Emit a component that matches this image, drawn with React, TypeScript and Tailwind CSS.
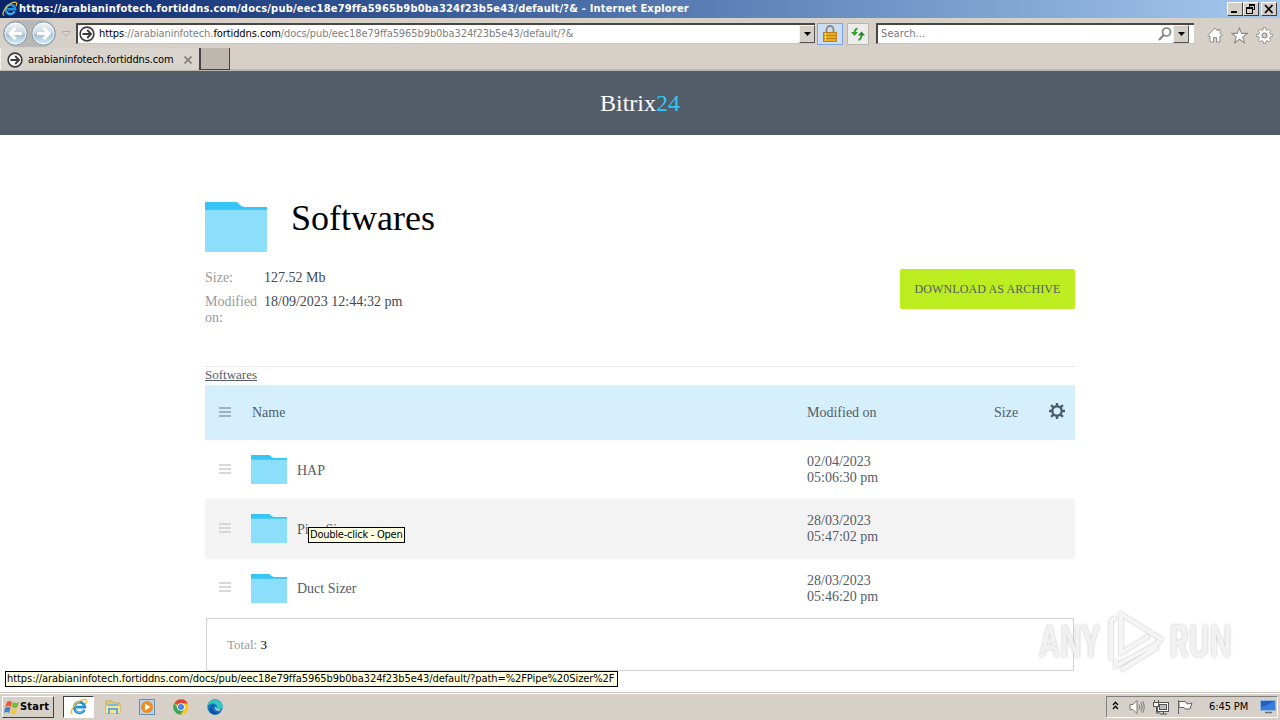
import type { ReactNode } from "react"

type Row = {
  name: string
  date: string
  time: string
  hovered?: boolean
  last?: boolean
}

const rows: Row[] = [
  { name: "HAP", date: "02/04/2023", time: "05:06:30 pm" },
  { name: "Pipe Sizer", date: "28/03/2023", time: "05:47:02 pm", hovered: true },
  { name: "Duct Sizer", date: "28/03/2023", time: "05:46:20 pm", last: true }
]

const FolderIcon = ({ className }: { className: string }) => (
  <svg className={className} viewBox="0 0 62 50" preserveAspectRatio="none">
    <path d="M0 0H31Q33 0 35 3Q37 5 40 5H62V12H0Z" fill="#36c5f4" />
    <path d="M0 8H62V48.500Q62 50 60.500 50H1.500Q0 50 0 48.500Z" fill="#8bdffa" />
  </svg>
)

const Burger = ({ dark }: { dark?: boolean }) => (
  <div className={dark ? "space-y-[2px] text-[#9fb3bf]" : "space-y-[2px] text-[#d5d7d9]"}>
    <div className="h-[2px] w-3 bg-current" />
    <div className="h-[2px] w-3 bg-current" />
    <div className="h-[2px] w-3 bg-current" />
  </div>
)

const IeIcon = ({ className }: { className: string }) => (
  <svg className={className} viewBox="0 0 18 18" fill="none">
    <path d="M14.300 11.800A5.300 5.300 0 1 1 14.800 9.200H6" stroke="#238fd5" strokeWidth="2.800" />
    <path d="M14 11.300A5 5 0 0 1 5 12" stroke="#72c8f2" strokeWidth="1" />
    <path d="M2.500 16C-1 16 3 7 9 3.300C13 .7 17 .6 16.500 3.500C16.300 4.500 16 5 15.500 6" stroke="#efbd32" strokeWidth="1.400" />
  </svg>
)

const ArrowCircle = () => (
  <svg className="size-4 shrink-0" viewBox="0 0 16 16" fill="none" stroke="#3c3c3c">
    <circle cx="8" cy="8" r="6.900" fill="#fff" strokeWidth="1.600" />
    <path d="M3.500 8H12M8.200 4L12.100 8L8.200 12" strokeWidth="1.900" />
  </svg>
)

const NavButton = ({ back }: { back?: boolean }) => (
  <svg className="size-[25px]" viewBox="0 0 25 25">
    <defs>
      <linearGradient id="nav" x1="0" y1="0" x2="0" y2="1">
        <stop offset="0" stopColor="#f4f7f9" />
        <stop offset=".48" stopColor="#c9d7e2" />
        <stop offset=".55" stopColor="#a9c1d3" />
        <stop offset="1" stopColor="#d9f2fa" />
      </linearGradient>
    </defs>
    <circle cx="12.500" cy="12.500" r="11.600" fill="url(#nav)" stroke="#8999a6" />
    <circle cx="12.500" cy="12.500" r="10.400" fill="none" stroke="#fff" strokeOpacity=".7" />
    <path
      d={back ? "M19 12.500H7.500M12.500 7L7 12.500L12.500 18" : "M6 12.500H17.500M12.500 7L18 12.500L12.500 18"}
      fill="none"
      stroke="#fff"
      strokeWidth="3"
    />
  </svg>
)

const DropButton = () => (
  <div className="flex h-[18px] w-4 items-center justify-center border border-t-[#f6f4f1] border-l-[#f6f4f1] border-r-[#555] border-b-[#555] bg-[#d4d0c8]">
    <svg className="h-1 w-[7px]" viewBox="0 0 7 4">
      <path d="M0 0H7L3.500 4Z" fill="#000" />
    </svg>
  </div>
)

const WinButton = ({ children }: { children: ReactNode }) => (
  <div className="h-[14px] w-4 border border-t-white border-l-white border-r-[#404040] border-b-[#404040] bg-[#d4d0c8]">
    <svg className="h-3 w-[14px]" viewBox="0 0 14 12" fill="none" stroke="#000" shapeRendering="crispEdges">
      {children}
    </svg>
  </div>
)

function TitleBar() {
  return (
    <div className="flex h-[18px] items-center bg-linear-to-r from-[#0a246a] to-[#a6caf0] pr-[3px]">
      <IeIcon className="mr-px ml-[2px] size-4" />
      <span className="text-[11px] leading-[18px] font-bold tracking-[0.198px] whitespace-pre text-white">
        https://arabianinfotech.fortiddns.com/docs/pub/eec18e79ffa5965b9b0ba324f23b5e43/default/?&amp; - Internet Explorer
      </span>
      <div className="ml-auto flex">
        <WinButton>
          <path d="M3 9H9" strokeWidth="2" />
        </WinButton>
        <WinButton>
          <path d="M5 2H11M5 1V4M10.500 1V7M8 6.500H11M2 5.500H8M2 5V10.500H8V5" />
          <path d="M2 5H9M5 1.500H11" strokeWidth="2" />
        </WinButton>
        <div className="ml-[2px]">
          <WinButton>
            <path d="M3 2L10.500 10M10.500 2L3 10" strokeWidth="1.800" shapeRendering="auto" />
          </WinButton>
        </div>
      </div>
    </div>
  )
}

function AddressBar() {
  return (
    <div className="flex h-[30px] items-center bg-[#d6d0c8] pt-px">
      <div className="ml-[3px] flex h-[27px] items-center gap-[3px] rounded-full bg-[#b9b8b6]">
        <NavButton back />
        <NavButton />
      </div>
      <svg className="ml-[5px] h-[6px] w-[10px]" viewBox="0 0 10 6">
        <path d="M1 .5H9L5 5Z" fill="#dedbd6" stroke="#b0aca5" />
      </svg>
      <div className="ml-[5px] flex h-[21px] w-[739px] items-center border-t-2 border-b border-l-2 border-t-[#4a4644] border-l-[#4a4644] border-b-[#c9c5be] bg-white">
        <div className="ml-px">
          <ArrowCircle />
        </div>
        <span className="ml-[4px] text-[11px] tracking-[-0.086px] whitespace-pre text-[#808080]">
          <span className="text-black">https</span>://arabianinfotech.<span className="text-black">fortiddns.com</span>/docs/pub/eec18e79ffa5965b9b0ba324f23b5e43/default/?&amp;
        </span>
        <div className="ml-auto">
          <DropButton />
        </div>
      </div>
      <div className="ml-[2px] flex h-[22px] w-[26px] items-center justify-center border border-[#7da7dc] bg-[#c9ddf5]">
        <svg className="h-[17px] w-[14px]" viewBox="0 0 14 17">
          <path d="M3.500 8V4.500A3.500 3.500 0 0 1 10.500 4.500V8" fill="none" stroke="#8e8870" strokeWidth="1.800" />
          <rect x=".5" y="7.500" width="13" height="9" fill="#e9ad1f" stroke="#b9821b" />
          <path d="M1 10.500H13M1 13.500H13" stroke="#ba7f12" />
          <path d="M2.500 8V16" stroke="#ffe486" />
        </svg>
      </div>
      <div className="ml-[4px] flex h-[22px] w-[22px] items-center justify-center border border-[#b8b5af] bg-[#eeecea]">
        <svg className="h-4 w-4" viewBox="0 0 16 16" fill="none" stroke="#30a032" strokeWidth="2">
          <path d="M7.500 2.500Q4.500 3 4.500 8" />
          <path d="M1 6H8L4.500 10Z" fill="#30a032" stroke="none" />
          <path d="M8.500 14Q11.500 13 11.500 8.500" />
          <path d="M8 9.500H15L11.500 5.500Z" fill="#218324" stroke="none" />
        </svg>
      </div>
      <div className="ml-[7px] flex h-[21px] w-[318px] items-center border-t-2 border-b border-l-2 border-t-[#4a4644] border-l-[#4a4644] border-b-[#c9c5be] bg-white">
        <span className="ml-[3px] text-[11px] tracking-[0.1px] text-[#777]">Search...</span>
        <svg className="ml-auto size-[14px]" viewBox="0 0 14 14" fill="none" stroke="#868686" strokeWidth="1.700">
          <circle cx="8.500" cy="5" r="4" />
          <path d="M5.700 8L1 13" strokeWidth="2.200" />
        </svg>
        <div className="mr-[5px] ml-px">
          <DropButton />
        </div>
      </div>
      <div className="mt-[3px] ml-[13px] flex gap-[8px] text-[#8e8b87]">
        <svg className="size-4" viewBox="0 0 16 16" fill="#fff" stroke="currentColor">
          <path d="M8 1L.8 8.500L2 9.500L3 8.800V15H6.500V10.500H9.500V15H13V8.800L14 9.500L15.200 8.500L13 6.200V2.500H11V4Z" />
        </svg>
        <svg className="size-[17px]" viewBox="0 0 16 16" fill="#fff" stroke="currentColor">
          <path d="M8 .8L10 6H15.400L11 9.300L12.700 15L8 11.500L3.300 15L5 9.300L.6 6H6Z" />
        </svg>
        <svg className="size-[17px]" viewBox="0 0 16 16" fill="#fff" stroke="currentColor" strokeWidth=".8">
          <path d="M6.800 .6H9.200V2.600L10.800 3.200L12.200 1.900L14 3.700L12.700 5.200L13.400 6.800H15.400V9.200H13.400L12.700 10.800L14 12.300L12.200 14.100L10.800 12.800L9.200 13.400V15.400H6.800V13.400L5.200 12.800L3.800 14.100L2 12.300L3.300 10.800L2.600 9.200H.6V6.800H2.600L3.300 5.200L2 3.700L3.800 1.900L5.200 3.200L6.800 2.600Z" />
          <circle cx="8" cy="8" r="2.300" fill="#d6d0c8" strokeWidth="1" />
        </svg>
      </div>
    </div>
  )
}

function TabBar() {
  return (
    <div className="flex h-[23px] items-start border-b-2 border-b-[#b8b6b2] bg-[#d6d0c8]">
      <div className="flex h-[22px] w-[198px] items-center border-l border-[#f2efeb] bg-[#d9d4cd] pt-[2px] pl-[6px]">
        <ArrowCircle />
        <span className="mt-px ml-[5px] text-[11px] tracking-[-0.14px] whitespace-pre">arabianinfotech.fortiddns.com</span>
        <svg className="mr-[6px] ml-auto size-2" viewBox="0 0 8 8" stroke="#85817d" strokeWidth="1.800">
          <path d="M.5 .5L7.500 7.500M7.500 .5L.5 7.500" />
        </svg>
      </div>
      <div className="ml-px h-[22px] w-[31px] border-r border-b border-l-2 border-[#444] bg-[#bdb7b0]" />
    </div>
  )
}

function FileTable() {
  return (
    <div className="text-[14px] leading-4 text-[#535c69]">
      <div className="flex h-[55px] items-center bg-[#d5f0fc]">
        <div className="-mt-[2px] ml-[14px] w-[33px]">
          <Burger dark />
        </div>
        <div className="w-[555px]">Name</div>
        <div className="w-[187px]">Modified on</div>
        <div className="w-[54px]">Size</div>
        <svg className="-mt-[3px] ml-[1px] size-4" viewBox="0 0 16 16" fill="none" stroke="#4d5c6a">
          <circle cx="8" cy="8" r="4.700" strokeWidth="2.400" />
          <path d="M8 0V3M8 13V16M0 8H3M13 8H16M2.100 2.100L4.500 4.500M11.500 11.500L13.900 13.900M13.900 2.100L11.500 4.500M4.500 11.500L2.100 13.900" strokeWidth="2.400" />
        </svg>
      </div>
      {rows.map((row) => (
        <div
          key={row.name}
          className={row.hovered ? "flex h-[60px] items-center bg-[#f3f3f3] pb-px" : "flex h-[59px] items-center"}
        >
          <div className={row.last ? "-mt-[4px] ml-[14px] w-8" : "-mt-[2px] ml-[14px] w-8"}>
            <Burger />
          </div>
          <FolderIcon className="h-[29px] w-9" />
          <div className={row.last ? "ml-[10px] w-[510px]" : "relative mt-[2px] ml-[10px] w-[510px]"}>
            {row.name}
            {row.hovered && (
              <div className="absolute top-[5px] left-[11px] flex h-4 w-[97px] items-center border border-black bg-[#ffffe1] pt-px pl-px font-['DejaVu_Sans_Condensed','DejaVu_Sans',sans-serif] text-[11px] tracking-[-0.24px] whitespace-pre text-black [font-stretch:condensed]">
                Double-click - Open
              </div>
            )}
          </div>
          <div className="mt-px">
            <div>{row.date}</div>
            <div>{row.time}</div>
          </div>
        </div>
      ))}
      <div className="ml-px flex h-[53px] w-[868px] items-center border border-[#d3d3d3] pl-5 text-[13px] text-[#999]">
        Total:&nbsp;<span className="text-black">3</span>
      </div>
    </div>
  )
}

function Watermark() {
  return (
    <div className="absolute top-[538px] left-[1039px] flex h-[64px] w-[196px] items-center justify-between font-['Roboto',sans-serif] text-[45px] leading-none font-medium text-[#f9f9f9]/85 [text-shadow:0_0_3px_#bbb]">
      <span className="w-[62px] origin-left scale-x-[0.79]">ANY</span>
      <svg className="size-16 drop-shadow-[0_0_1px_#bbb]" viewBox="0 0 64 64" fill="none" stroke="#f5f5f5" strokeWidth="4">
        <path d="M8 51V12L13 8M18 44V5L58 30L54 34M18 18V44L46 27M13 51V57L57 33M18 61L55 38" />
      </svg>
      <span className="w-[66px] origin-left scale-x-[0.81]">RUN</span>
    </div>
  )
}

function Page() {
  return (
    <div className="relative h-[621px] bg-white font-['Liberation_Serif',serif]">
      <div className="flex h-16 items-center justify-center bg-[#535c69] text-[24px] text-white">
        <span>
          Bitrix<span className="text-[#2fc6f6]">24</span>
        </span>
      </div>
      <div className="mx-auto w-[870px] pt-[67px]">
        <div className="flex h-[50px]">
          <FolderIcon className="h-[50px] w-[62px]" />
          <h1 className="-mt-[5px] ml-[24px] text-[36px] leading-[42px]">Softwares</h1>
        </div>
        <div className="mt-[17px] flex h-[98px] items-start justify-between border-b border-[#eaeaea]">
          <div className="mt-px grid grid-cols-[59px_200px] gap-y-2 text-[14px] leading-4 text-[#404756]">
            <div className="text-[#999]">Size:</div>
            <div>127.52 Mb</div>
            <div className="text-[#999]">Modified on:</div>
            <div>18/09/2023 12:44:32 pm</div>
          </div>
          <button className="h-10 w-[175px] rounded-[2px] bg-[#bbed21] text-[12px] tracking-[0.1px] text-[#535c69]">
            DOWNLOAD AS ARCHIVE
          </button>
        </div>
        <div className="h-[18px] text-[13px] leading-4 text-[#535c69] underline">Softwares</div>
        <FileTable />
      </div>
      <Watermark />
      <div className="absolute top-[600px] left-[5px] flex h-4 w-[613px] items-center border border-black bg-[#ffffe1] pt-px pl-px font-['DejaVu_Sans_Condensed','DejaVu_Sans',sans-serif] text-[11px] tracking-[-0.068px] whitespace-pre [font-stretch:condensed]">
        https://arabianinfotech.fortiddns.com/docs/pub/eec18e79ffa5965b9b0ba324f23b5e43/default/?path=%2FPipe%20Sizer%2F
      </div>
    </div>
  )
}

function Taskbar() {
  return (
    <div className="flex h-7 items-center border-t border-[#c9c5be] bg-[#d6d0c8] pt-px shadow-[inset_0_1px_#fff]">
      <div className="ml-[2px] flex h-[22px] w-[52px] items-center border border-t-white border-l-white border-r-[#404040] border-b-[#404040] text-[11px] font-bold">
        <svg className="ml-px size-4 shrink-0" viewBox="0 0 16 16">
          <path d="M3 3Q6 1 8 3L7 8Q4 6 1 8Z" fill="#ee5a2c" />
          <path d="M9 3Q12 5 15 3L13.500 8Q11 10 8 8Z" fill="#77b83b" />
          <path d="M1 9Q4 7 6.500 9L5 14Q3 12 0 14Z" fill="#3c80d0" />
          <path d="M7.500 9Q10 11 13 9L12 14Q9 16 6 14Z" fill="#f6c53b" />
        </svg>
        <span className="pt-px tracking-[0.2px]">Start</span>
      </div>
      <div className="ml-[9px] flex h-[22px] w-[31px] items-center justify-center border border-t-[#404040] border-l-[#404040] border-white bg-white">
        <IeIcon className="size-[18px]" />
      </div>
      <svg className="ml-[11px] size-4" viewBox="0 0 16 16">
        <path d="M1 2H7L8 4H15V14H1Z" fill="#e9cb69" stroke="#c8ad56" />
        <path d="M3 5H13V8H3Z" fill="#75b8d7" />
        <path d="M1 7H15V14H1Z" fill="#f5e39c" />
        <path d="M4 15V10H12V15" fill="none" stroke="#61a9d0" strokeWidth="2" />
      </svg>
      <svg className="ml-[18px] size-4" viewBox="0 0 16 16">
        <rect x=".5" y=".5" width="15" height="15" fill="#b4d4ed" stroke="#6b8fac" />
        <circle cx="8" cy="8" r="6" fill="#f18a20" />
        <path d="M6 4.500L11.500 8L6 11.500Z" fill="#fff" />
      </svg>
      <svg className="ml-[18px] size-4" viewBox="0 0 16 16">
        <circle cx="8" cy="8" r="7.700" fill="#f7c72b" />
        <path d="M8 8L1.300 4A7.700 7.700 0 0 1 14.800 4.400H8Z" fill="#df4435" />
        <path d="M1.300 4A7.700 7.700 0 0 0 7.500 15.700L11 10L8 8L4.700 9.500Z" fill="#3ba459" />
        <circle cx="8" cy="8" r="3.800" fill="#fff" />
        <circle cx="8" cy="8" r="3" fill="#4684e8" />
      </svg>
      <svg className="ml-[18px] size-4" viewBox="0 0 16 16">
        <circle cx="8" cy="8" r="7.700" fill="#1478c8" />
        <path d="M.5 6C2 0 12-2 15.300 5.500C17 10 11 11.500 9.500 9C11 7 9 4.500 6 4.500C3 4.500 1 6 .4 8Z" fill="#37c6bb" />
        <path d="M6 7C4 12 9 15 14 12.500C10 18 1 15 3 9C4 6 7 5 9 7Z" fill="#13539e" />
        <path d="M8.500 7.500Q7 10.500 10.500 11.500Q13 12 15 10.500Q12 11 9.500 9.500Z" fill="#d6d0c8" />
      </svg>
      <div className="mr-[2px] ml-auto flex h-[22px] w-[172px] items-center border border-t-[#808080] border-l-[#808080] border-r-white border-b-white text-[11px]">
        <svg className="-mt-[3px] ml-[5px] h-[9px] w-[7px]" viewBox="0 0 7 9" fill="none" stroke="#000" strokeWidth="1.300">
          <path d="M1 4L3.500 1.300L6 4M1 8L3.500 5.300L6 8" />
        </svg>
        <svg className="ml-[10px] size-4" viewBox="0 0 16 16" fill="none" stroke="#777">
          <path d="M1 5.500H4L8 1.500V14.500L4 10.500H1Z" fill="#fff" />
          <path d="M10 5.500Q11.500 8 10 10.500M12 3.500Q14.500 8 12 12.500M13.500 2Q17 8 13.500 14" />
        </svg>
        <svg className="ml-[8px] size-4" viewBox="0 0 16 16" fill="none" stroke="#555">
          <rect x="4.500" y="3.500" width="11" height="9" fill="#fff" />
          <rect x="6.500" y="5.500" width="7" height="5" fill="#bbb" />
          <path d="M7 15H14M10.500 12.500V15M1.500 1V5.500H5.500V1M3.500 6V14H7" />
          <rect x=".5" y="3.500" width="5" height="4" fill="#fff" />
        </svg>
        <svg className="ml-[8px] size-4" viewBox="0 0 16 16" fill="#fff" stroke="#666">
          <path d="M1.500 15V1M2 2.500H8.500L10 5L15 4L13 10H8L7 8.500H2Z" />
        </svg>
        <span className="ml-[16px] pt-px tracking-[-0.1px] whitespace-pre">6:45 PM</span>
        <svg className="mr-px ml-auto h-[14px] w-4" viewBox="0 0 16 14">
          <rect x=".5" y=".5" width="15" height="10" fill="#1e5fc0" stroke="#94b4dc" />
          <path d="M1 7Q7 6 14 1H15V10H1Z" fill="#397cdb" />
          <path d="M5 12.500H12" stroke="#607084" strokeWidth="1.500" />
        </svg>
      </div>
    </div>
  )
}

export default function App() {
  return (
    <div className="h-[720px] w-[1280px] overflow-hidden bg-white font-['DejaVu_Sans_Condensed','DejaVu_Sans',sans-serif] text-black [font-stretch:condensed]">
      <TitleBar />
      <AddressBar />
      <TabBar />
      <Page />
      <Taskbar />
    </div>
  )
}
